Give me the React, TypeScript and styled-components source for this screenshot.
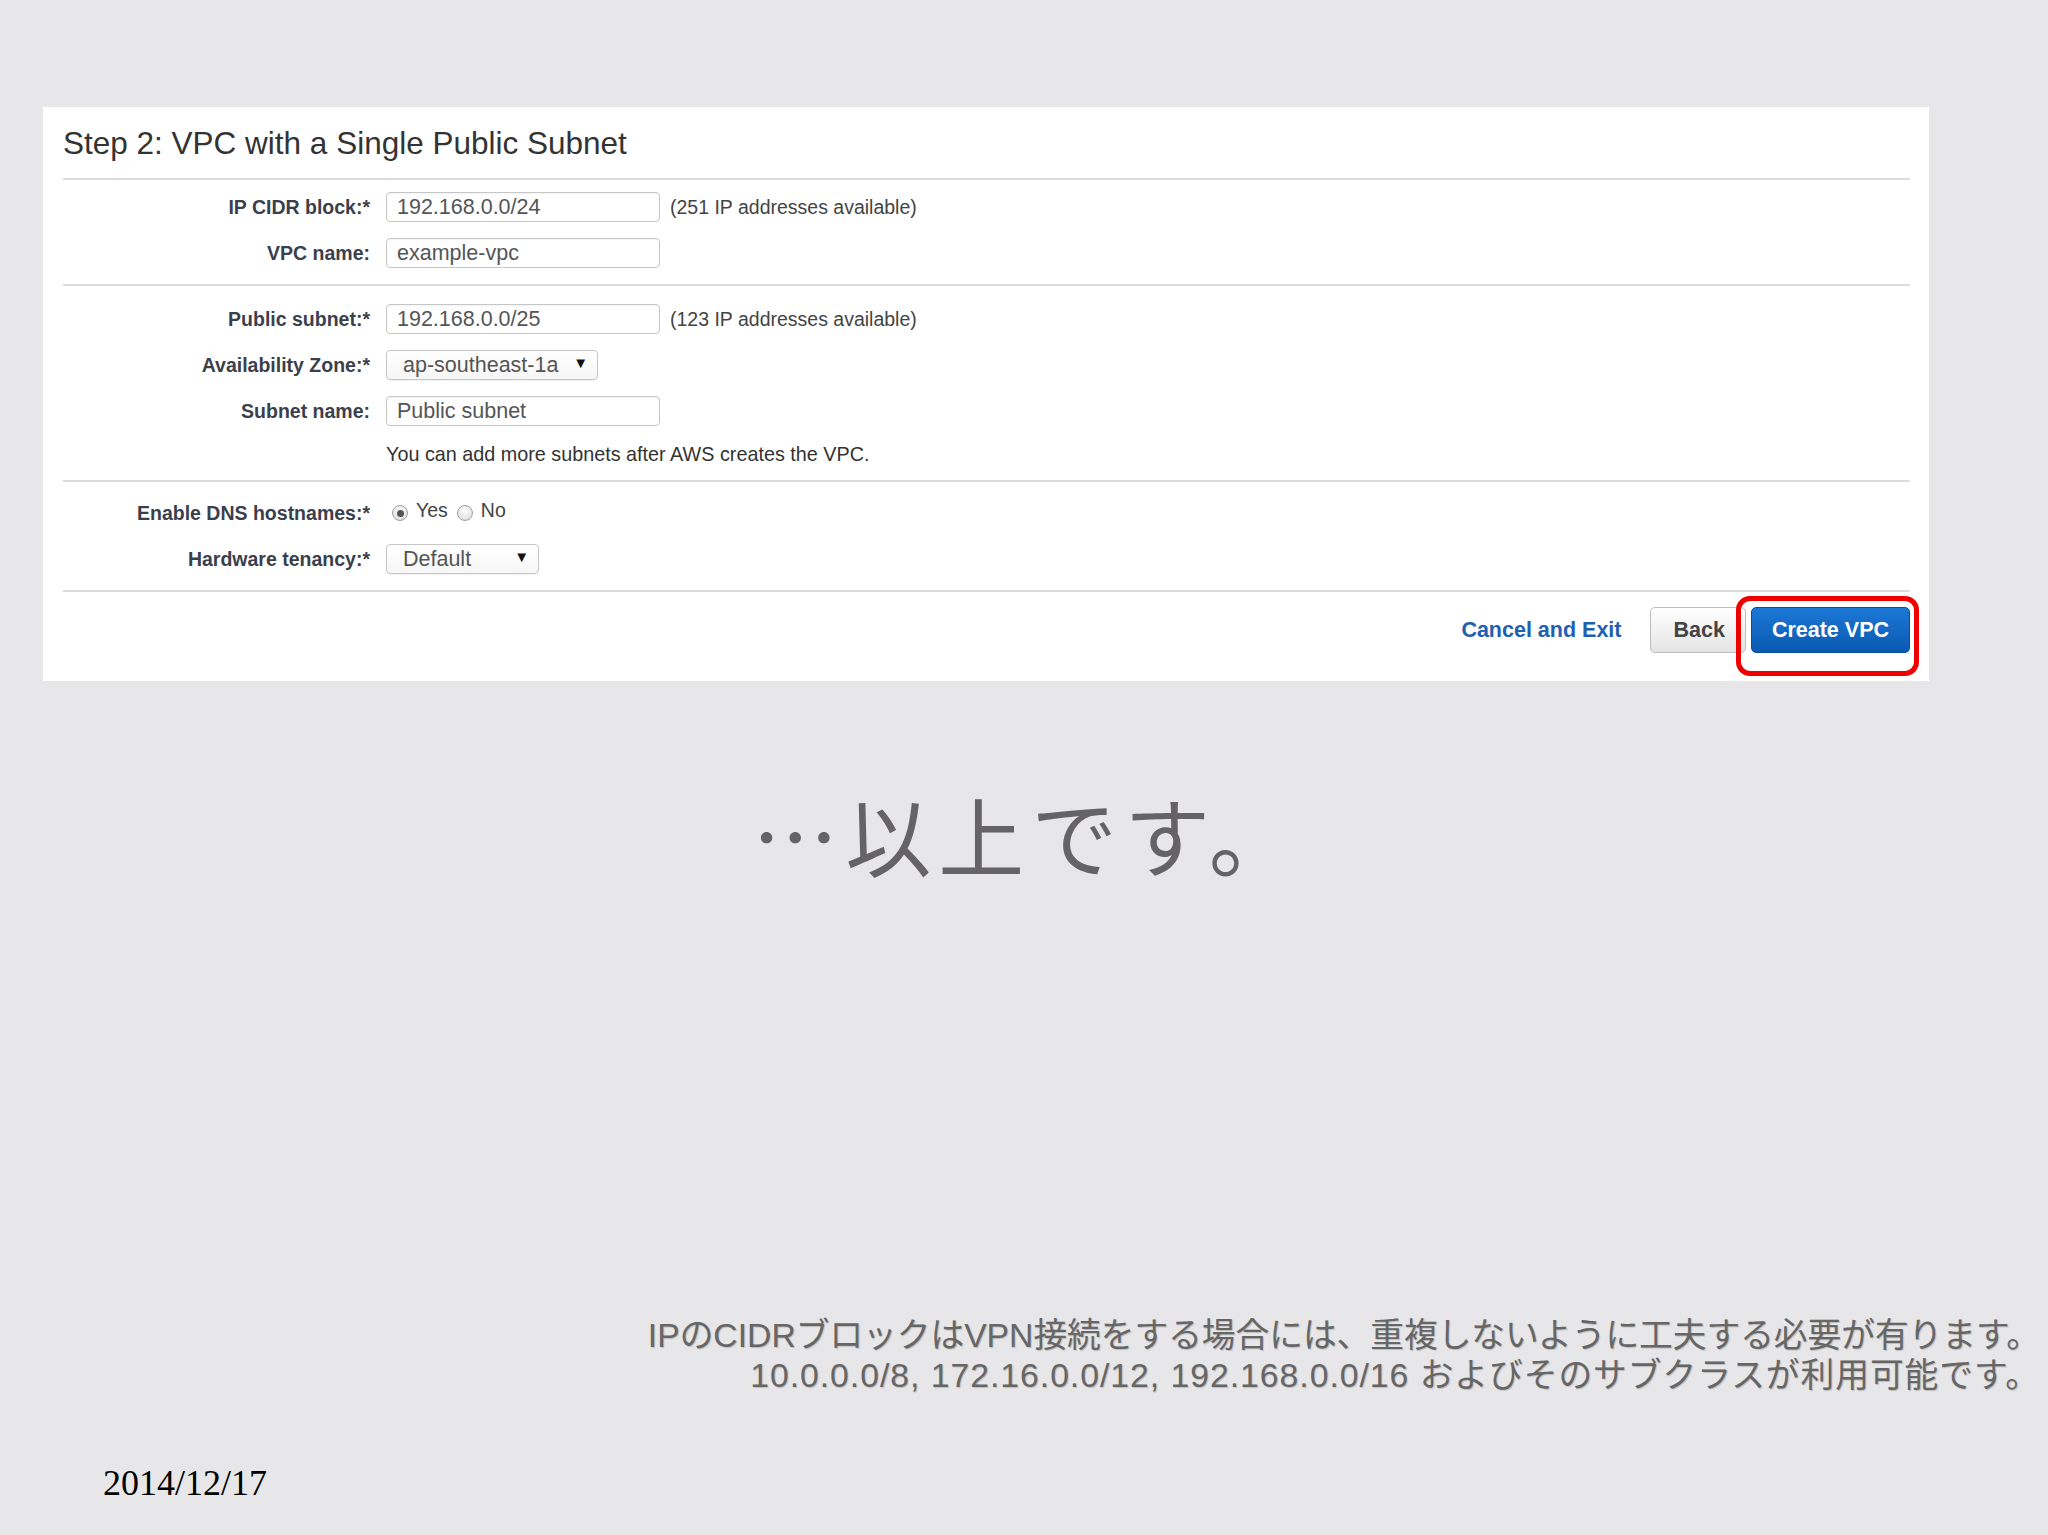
import React from 'react'
import styled, { createGlobalStyle } from 'styled-components'

const GlobalStyle = createGlobalStyle`
  html, body {
    margin: 0;
    padding: 0;
    background: #e7e6e8;
  }
  * {
    box-sizing: border-box;
  }
`

const Slide = styled.div`
  width: 2048px;
  height: 1535px;
  overflow: hidden;
  background: #e7e6e8;
  display: flex;
  flex-direction: column;
  font-family: 'Liberation Sans', Arial, sans-serif;
`

// AWS wizard screenshot pasted into the slide
const Panel = styled.div`
  margin: 107px 0 0 43px;
  width: 1886px;
  height: 574px;
  background: #fff;
  padding: 0 19px 0 20px;
  display: flex;
  flex-direction: column;
`

const Title = styled.h2`
  margin: 19px 0 0;
  height: 52px;
  font-size: 31.5px;
  line-height: 35px;
  font-weight: normal;
  color: #333;
`

const Section = styled.div<{ $top: number; $bottom: number }>`
  border-top: 2px solid #dcdcdc;
  padding: ${(p) => p.$top}px 0 ${(p) => p.$bottom}px;
  display: flex;
  flex-direction: column;
  gap: 16px;
`

const Row = styled.div`
  display: flex;
  align-items: center;
  height: 30px;
`

const Label = styled.label`
  width: 307px;
  margin-right: 16px;
  text-align: right;
  font-size: 19.5px;
  font-weight: bold;
  color: #3b3f4c;
  white-space: nowrap;
`

const TextInput = styled.input`
  width: 274px;
  height: 30px;
  padding: 0 10px;
  border: 1px solid #c6c6c6;
  border-radius: 4px;
  background: #fff;
  font-family: inherit;
  font-size: 21.5px;
  color: #555;
  box-shadow: inset 0 1px 1px rgba(0, 0, 0, 0.04);
  outline: none;
`

const Hint = styled.span`
  margin-left: 10px;
  font-size: 19.5px;
  color: #444;
`

const Note = styled.div`
  margin-left: 323px;
  height: 24px;
  line-height: 24px;
  font-size: 19.8px;
  color: #333;
`

const Select = styled.div<{ $width: number }>`
  width: ${(p) => p.$width}px;
  height: 30px;
  padding: 0 9px 0 16px;
  border: 1px solid #c6c6c6;
  border-radius: 4px;
  background: linear-gradient(#ffffff, #f6f6f6);
  box-shadow: 0 1px 1px rgba(0, 0, 0, 0.06);
  display: flex;
  align-items: center;
  justify-content: space-between;
  font-size: 21.5px;
  color: #555;
`

const Caret = styled.span`
  font-size: 15px;
  color: #111;
  margin-top: -6px;
`

const RadioGroup = styled.div`
  display: flex;
  align-items: center;
  gap: 9px;
  margin-left: 6px;
`

const RadioOption = styled.span`
  display: flex;
  align-items: center;
  gap: 8px;
  font-size: 19.5px;
  color: #444;
`

const RadioText = styled.span`
  margin-top: -5px;
`

const RadioDot = styled.span<{ $checked?: boolean }>`
  width: 16px;
  height: 16px;
  border-radius: 50%;
  border: 1px solid #a0a0a0;
  background: radial-gradient(circle at 50% 35%, #fdfdfd, #d8d8d8);
  display: flex;
  align-items: center;
  justify-content: center;
  &::after {
    content: '';
    width: 7px;
    height: 7px;
    border-radius: 50%;
    background: ${(p) => (p.$checked ? '#555' : 'transparent')};
  }
`

const Footer = styled.div`
  border-top: 2px solid #dcdcdc;
  padding-top: 15px;
  display: flex;
  justify-content: flex-end;
  align-items: center;
`

const CancelLink = styled.a`
  font-size: 21.5px;
  font-weight: bold;
  color: #2160b0;
  text-decoration: none;
  margin-right: 29px;
`

const Button = styled.button<{ $primary?: boolean }>`
  height: 46px;
  padding: 0 20px 0 ${(p) => (p.$primary ? 20 : 22)}px;
  border-radius: 5px;
  font-family: inherit;
  font-size: 21.5px;
  font-weight: bold;
  border: 1px solid ${(p) => (p.$primary ? '#0b4f9c' : '#bdbdbd')};
  color: ${(p) => (p.$primary ? '#fff' : '#444')};
  background: ${(p) =>
    p.$primary
      ? 'linear-gradient(#1c78d6, #0a59b0)'
      : 'linear-gradient(#ffffff, #e4e4e4)'};
`

const Highlight = styled.div`
  position: relative;
  margin-left: 5px;
`

// red marker drawn over the screenshot
const RedFrame = styled.div`
  position: absolute;
  left: -15px;
  top: -11px;
  right: -9px;
  bottom: -23px;
  border: 5px solid #ee0000;
  border-radius: 14px;
  pointer-events: none;
`

const Closing = styled.div`
  margin-top: 110px;
  padding-left: 6px;
  text-align: center;
  font-family: 'Noto Sans CJK JP', sans-serif;
  font-size: 86px;
  line-height: 86px;
  letter-spacing: 7px;
  color: #656366;
`

const Remarks = styled.div`
  margin-top: 438px;
  padding-right: 8px;
  text-align: right;
  font-family: 'Liberation Sans', 'Noto Sans CJK JP', sans-serif;
  font-size: 33.7px;
  line-height: 40px;
  color: #666;
  text-shadow: 1px 1px 1px rgba(0, 0, 0, 0.18);
  white-space: nowrap;
`

const RemarkLine = styled.div<{ $spacing?: number }>`
  letter-spacing: ${(p) => p.$spacing || 0}px;
`

const DateStamp = styled.div`
  margin: 68px 0 0 103px;
  font-family: 'Liberation Serif', 'Times New Roman', serif;
  font-size: 36px;
  line-height: 40px;
  color: #000;
`

const Field = ({
  label,
  value,
  hint,
}: {
  label: string
  value: string
  hint?: string
}) => (
  <Row>
    <Label>{label}</Label>
    <TextInput readOnly value={value} />
    {hint && <Hint>{hint}</Hint>}
  </Row>
)

const SelectField = ({
  label,
  value,
  width,
}: {
  label: string
  value: string
  width: number
}) => (
  <Row>
    <Label>{label}</Label>
    <Select $width={width}>
      <span>{value}</span>
      <Caret>▼</Caret>
    </Select>
  </Row>
)

export default function App() {
  return (
    <Slide>
      <GlobalStyle />
      <Panel>
        <Title>Step 2: VPC with a Single Public Subnet</Title>
        <Section $top={12} $bottom={16}>
          <Field
            label="IP CIDR block:*"
            value="192.168.0.0/24"
            hint="(251 IP addresses available)"
          />
          <Field label="VPC name:" value="example-vpc" />
        </Section>
        <Section $top={18} $bottom={14}>
          <Field
            label="Public subnet:*"
            value="192.168.0.0/25"
            hint="(123 IP addresses available)"
          />
          <SelectField label="Availability Zone:*" value="ap-southeast-1a" width={212} />
          <Field label="Subnet name:" value="Public subnet" />
          <Note>You can add more subnets after AWS creates the VPC.</Note>
        </Section>
        <Section $top={16} $bottom={16}>
          <Row>
            <Label>Enable DNS hostnames:*</Label>
            <RadioGroup>
              <RadioOption>
                <RadioDot $checked />
                <RadioText>Yes</RadioText>
              </RadioOption>
              <RadioOption>
                <RadioDot />
                <RadioText>No</RadioText>
              </RadioOption>
            </RadioGroup>
          </Row>
          <SelectField label="Hardware tenancy:*" value="Default" width={153} />
        </Section>
        <Footer>
          <CancelLink href="#">Cancel and Exit</CancelLink>
          <Button>Back</Button>
          <Highlight>
            <Button $primary>Create VPC</Button>
            <RedFrame />
          </Highlight>
        </Footer>
      </Panel>
      <Closing>…以上です。</Closing>
      <Remarks>
        <RemarkLine>IPのCIDRブロックはVPN接続をする場合には、重複しないように工夫する必要が有ります。</RemarkLine>
        <RemarkLine $spacing={1}>
          10.0.0.0/8, 172.16.0.0/12, 192.168.0.0/16 およびそのサブクラスが利用可能です。
        </RemarkLine>
      </Remarks>
      <DateStamp>2014/12/17</DateStamp>
    </Slide>
  )
}
